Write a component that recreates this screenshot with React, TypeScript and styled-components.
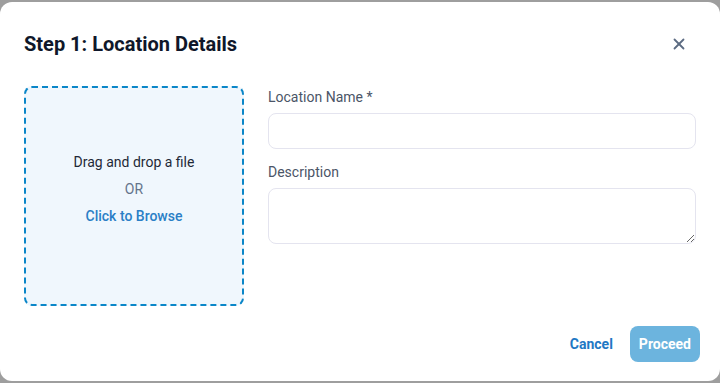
import styled, { createGlobalStyle } from "styled-components";
import { X } from "lucide-react";

const GlobalStyle = createGlobalStyle`
  * { box-sizing: border-box; }
  html, body { margin: 0; padding: 0; }
  body {
    font-family: Roboto, "Liberation Sans", sans-serif;
    background: #9e9e9e;
  }
`;

export default function App() {
  return (
    <Backdrop>
      <GlobalStyle />
      <Dialog>
        <Header>
          <Title>Step 1: Location Details</Title>
          <CloseButton aria-label="Close">
            <X size={18} strokeWidth={2.4} />
          </CloseButton>
        </Header>
        <Body>
          <DropZone>
            <DropText>Drag and drop a file</DropText>
            <OrText>OR</OrText>
            <BrowseText>Click to Browse</BrowseText>
          </DropZone>
          <Form>
            <Field>
              <Label>Location Name *</Label>
              <Input />
            </Field>
            <Field>
              <Label>Description</Label>
              <TextArea />
            </Field>
          </Form>
        </Body>
        <Footer>
          <TextButton>Cancel</TextButton>
          <PrimaryButton disabled>Proceed</PrimaryButton>
        </Footer>
      </Dialog>
    </Backdrop>
  );
}

const Backdrop = styled.div`
  width: 720px;
  height: 383px;
  padding: 2px 0;
  display: flex;
`;

const Dialog = styled.div`
  flex: 1;
  display: flex;
  flex-direction: column;
  background: #ffffff;
  border-radius: 12px;
  padding: 24px 20px 19px 24px;
`;

const Header = styled.div`
  display: flex;
  align-items: center;
  justify-content: space-between;
  height: 36px;
`;

const Title = styled.h2`
  margin: 0;
  font-size: 20px;
  font-weight: 700;
  color: #0f172a;
`;

const CloseButton = styled.button`
  border: none;
  background: none;
  padding: 0;
  margin-right: 12px;
  display: flex;
  color: #5c6b82;
  cursor: pointer;
`;

const Body = styled.div`
  display: flex;
  gap: 24px;
  margin-top: 24px;
  padding-right: 4px;
`;

const DropZone = styled.div`
  width: 220px;
  height: 220px;
  flex-shrink: 0;
  display: flex;
  flex-direction: column;
  align-items: center;
  justify-content: center;
  gap: 7px;
  padding-bottom: 14px;
  border: 2px dashed #0a86c8;
  border-radius: 8px;
  background: #f0f7fd;
  font-size: 14px;
`;

const DropText = styled.span`
  color: #1f2937;
  line-height: 20px;
`;

const OrText = styled.span`
  color: #64748b;
  line-height: 20px;
`;

const BrowseText = styled.span`
  color: #2a7fc6;
  font-weight: 500;
  line-height: 20px;
  cursor: pointer;
`;

const Form = styled.div`
  flex: 1;
  display: flex;
  flex-direction: column;
  gap: 13px;
  padding-top: 1px;
`;

const Field = styled.label`
  display: flex;
  flex-direction: column;
  gap: 6px;
`;

const Label = styled.span`
  font-size: 14px;
  line-height: 20px;
  color: #4b5567;
`;

const Input = styled.input`
  height: 36px;
  border: 1px solid #e4e4ef;
  border-radius: 8px;
  padding: 0 12px;
  font: inherit;
  outline: none;
`;

const TextArea = styled.textarea`
  height: 56px;
  border: 1px solid #e4e4ef;
  border-radius: 8px;
  padding: 8px 12px;
  font: inherit;
  outline: none;
  resize: vertical;
`;

const Footer = styled.div`
  margin-top: auto;
  display: flex;
  justify-content: flex-end;
  align-items: center;
  gap: 8px;
`;

const TextButton = styled.button`
  border: none;
  background: none;
  height: 36px;
  padding: 0 9px;
  font-family: inherit;
  font-size: 14px;
  font-weight: 700;
  color: #1f78c4;
  cursor: pointer;
`;

const PrimaryButton = styled.button`
  border: none;
  height: 36px;
  padding: 0 9px;
  border-radius: 8px;
  background: #6cb4de;
  font-family: inherit;
  font-size: 14px;
  font-weight: 700;
  color: #ffffff;
`;
